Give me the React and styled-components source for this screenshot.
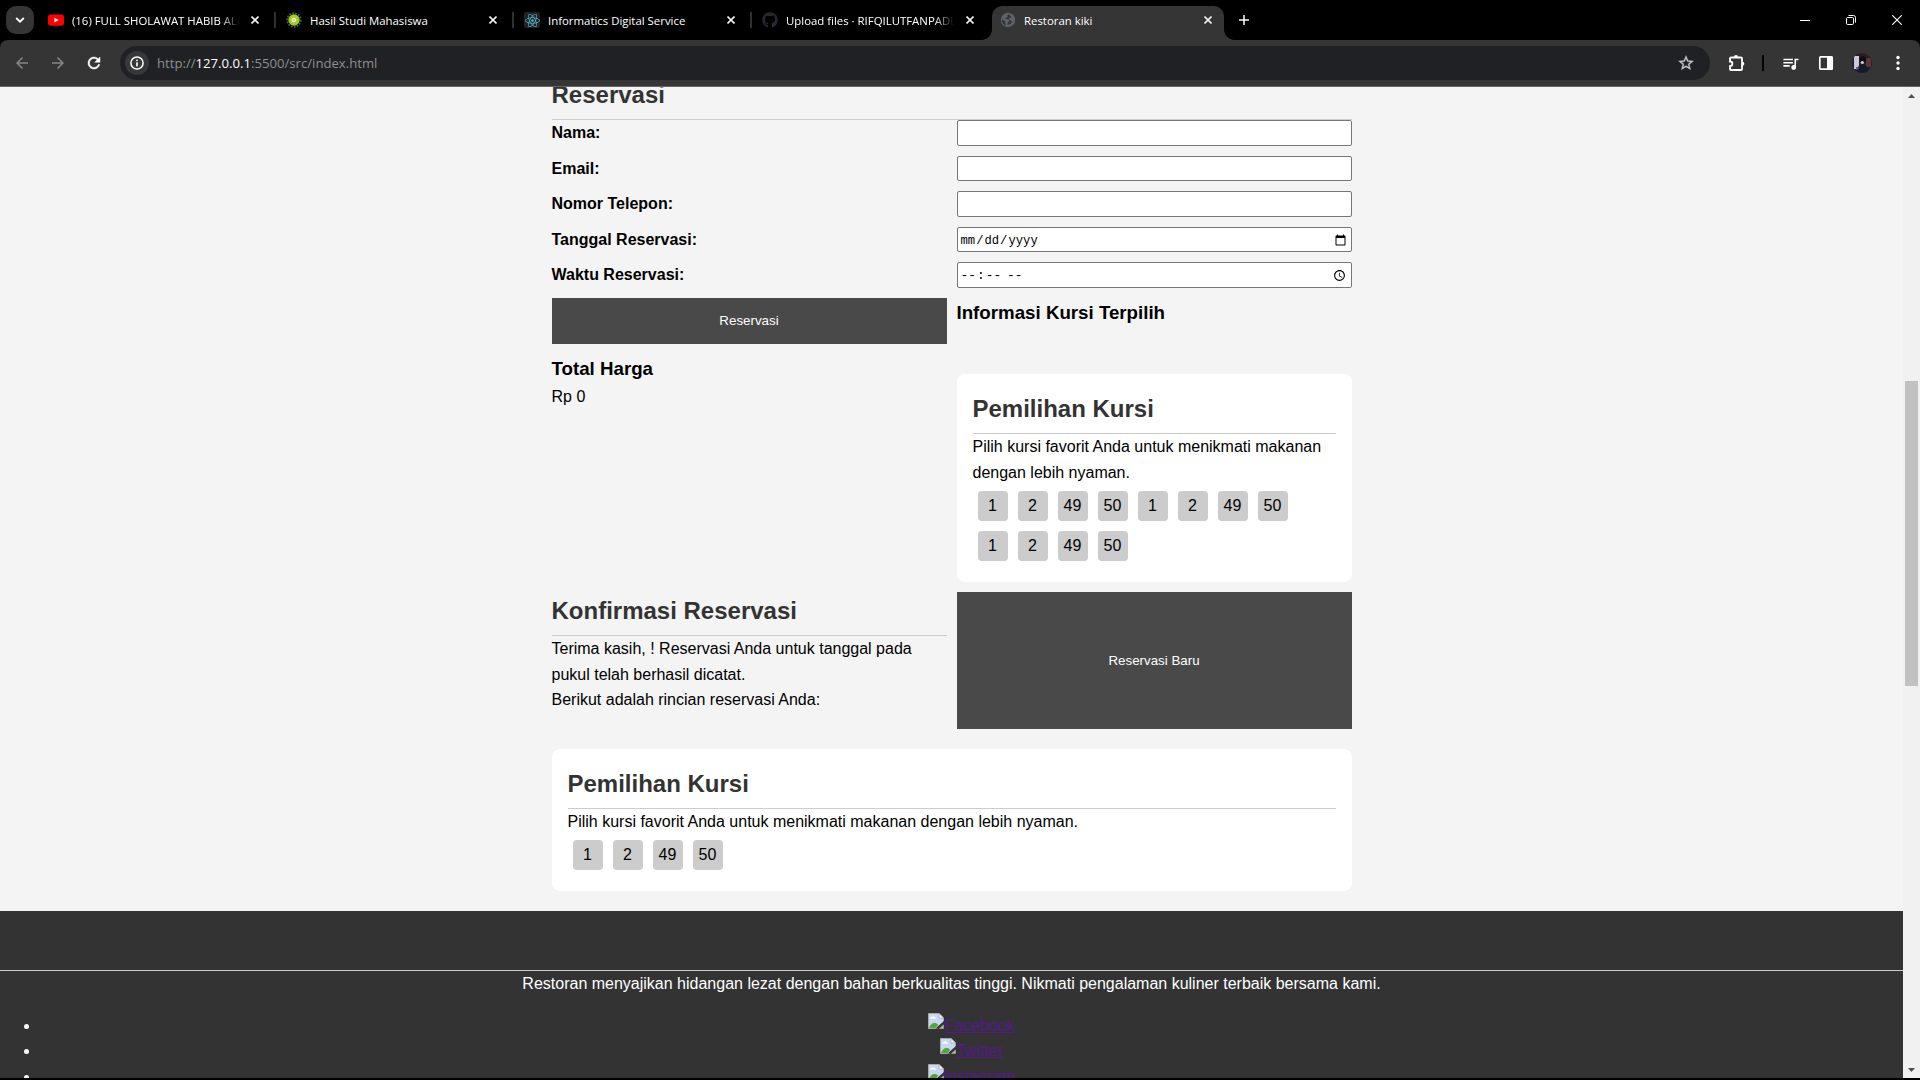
import React from "react";
import styled, { createGlobalStyle, css } from "styled-components";
import { FaGithub, FaReact } from "react-icons/fa";

const GlobalStyle = createGlobalStyle`
  * { box-sizing: border-box; margin: 0; padding: 0; }
  html, body, #root { height: 100%; overflow: hidden; }
  body { background: #000; }
`;

const UI_FONT = `"Open Sans", "Noto Sans", sans-serif`;
const PAGE_FONT = `"Liberation Sans", Arial, sans-serif`;

/* ---------- browser window ---------- */

const Window = styled.div`
  width: 1920px;
  height: 1080px;
  display: flex;
  flex-direction: column;
  background: #000;
  padding-bottom: 2px;
  overflow: hidden;
  font-family: ${UI_FONT};
`;

const TabStrip = styled.div`
  flex: 0 0 40px;
  display: flex;
  align-items: stretch;
  padding-left: 6px;
`;

const TabSearch = styled.div`
  width: 28px;
  height: 28px;
  margin: 6px 4px 0 0;
  border-radius: 10px;
  background: #353535;
  display: flex;
  align-items: center;
  justify-content: center;
`;

const Tab = styled.div`
  width: 238px;
  height: 40px;
  padding: 0 0 0 10px;
  display: flex;
  align-items: center;
  position: relative;
`;

const ActiveTab = styled.div`
  width: 232px;
  height: 34px;
  margin: 6px 0 0 2px;
  padding: 0 0 6px 8px;
  display: flex;
  align-items: center;
  background: #353535;
  border-radius: 10px 10px 0 0;
  position: relative;
  &::before,
  &::after {
    content: "";
    position: absolute;
    bottom: 0;
    width: 10px;
    height: 10px;
  }
  &::before {
    left: -10px;
    background: radial-gradient(circle at 0 0, transparent 9.5px, #353535 10px);
  }
  &::after {
    right: -10px;
    background: radial-gradient(circle at 100% 0, transparent 9.5px, #353535 10px);
  }
`;

const Favicon = styled.div`
  width: 16px;
  height: 16px;
  margin-right: 8px;
  display: flex;
  align-items: center;
  justify-content: center;
  flex: none;
`;

const TabTitle = styled.div`
  width: 168px;
  height: 20px;
  padding-top: 2px;
  line-height: 18px;
  font-size: 11.4px;
  color: #fff;
  white-space: nowrap;
  overflow: hidden;
  ${(p) =>
    p.$fade &&
    css`
      mask-image: linear-gradient(90deg, #000 148px, transparent 168px);
    `}
`;

const CloseSlot = styled.div`
  width: 32px;
  display: flex;
  justify-content: center;
`;

const Divider = styled.div`
  width: 2px;
  height: 16px;
  margin-left: 3px;
  background: #303030;
`;

const NewTab = styled.div`
  width: 28px;
  margin-left: 6px;
  display: flex;
  align-items: center;
  justify-content: center;
`;

const WindowControls = styled.div`
  margin-left: auto;
  display: flex;
`;

const ControlButton = styled.div`
  width: 46px;
  display: flex;
  align-items: center;
  justify-content: center;
`;

const Toolbar = styled.div`
  flex: 0 0 47px;
  display: flex;
  align-items: center;
  background: #353535;
  border-radius: 8px 8px 0 0;
  border-bottom: 1px solid #666;
  padding: 0 4px;
`;

const ToolButton = styled.div`
  width: ${(p) => p.$w || 36}px;
  height: 34px;
  flex: none;
  display: flex;
  align-items: center;
  justify-content: center;
`;

const AddressBar = styled.div`
  width: 1590px;
  height: 34px;
  flex: none;
  margin-left: 8px;
  padding: 0 12px 0 5px;
  border-radius: 17px;
  background: #202124;
  display: flex;
  align-items: center;
`;

const SiteInfo = styled.div`
  width: 24px;
  height: 24px;
  border-radius: 50%;
  background: #37383a;
  display: flex;
  align-items: center;
  justify-content: center;
`;

const Url = styled.div`
  margin-left: 8px;
  flex: 1;
  font-size: 13.15px;
  line-height: 20px;
  color: #8d8f92;
  b {
    font-weight: 400;
    color: #fff;
  }
`;

const ToolDivider = styled.div`
  width: 2px;
  height: 16px;
  margin-right: 8px;
  background: #000;
`;

/* ---------- viewport ---------- */

const Viewport = styled.div`
  flex: 1;
  min-height: 0;
  display: flex;
`;

const Page = styled.div`
  width: 1903px;
  height: 991px;
  overflow: hidden;
  background: #f4f4f4;
  color: #000;
  font-family: ${PAGE_FONT};
  font-size: 16px;
  line-height: 25.6px;
`;

const Scrollbar = styled.div`
  width: 17px;
  background: #f1f1f1;
  display: flex;
  flex-direction: column;
  align-items: center;
`;

const ScrollArrow = styled.div`
  height: 17px;
  flex: none;
  display: flex;
  align-items: center;
`;

const ScrollTrack = styled.div`
  flex: 1;
  padding-top: 277px;
`;

const ScrollThumb = styled.div`
  width: 13px;
  height: 305px;
  background: #c1c1c1;
`;

/* ---------- page content ---------- */

const Main = styled.main`
  width: 800px;
  margin: -11.43px auto 0;
`;

const Heading = styled.h2`
  min-height: 44.4px;
  font-size: 24px;
  line-height: 38.4px;
  font-weight: 700;
  color: #333;
  padding-bottom: 5px;
  border-bottom: 1px solid #ccc;
`;

const SubHeading = styled.h3`
  font-size: 18.72px;
  line-height: 29.95px;
  font-weight: 700;
`;

const Form = styled.div`
  display: grid;
  grid-template-columns: 1fr 1fr;
  gap: 10px;
`;

const Label = styled.label`
  font-weight: 700;
  height: 25.6px;
`;

const Field = styled.input`
  width: 100%;
  height: 25.6px;
  padding: ${(p) => (p.type === "date" ? "3px 2px 1px" : "2px 2px 1px")};
  border: 1px solid #767676;
  border-radius: 2px;
  background: #fff;
  color: #000;
  font-family: "Liberation Mono", monospace;
  font-size: ${(p) => (p.type === "time" ? 12.9 : 12.2)}px;
  &::-webkit-calendar-picker-indicator {
    margin-right: ${(p) => (p.type === "time" ? -1 : 0)}px;
  }
`;

const Button = styled.button`
  border: 0;
  background: #494949;
  color: #fff;
  font-family: ${PAGE_FONT};
  font-size: 13.333px;
`;

const SeatInfo = styled.div`
  padding-bottom: 16px;
`;

const Card = styled.section`
  margin-top: 20px;
  padding: 16px;
  border-radius: 8px;
  background: #fff;
`;

const Seats = styled.div`
  display: flex;
  flex-wrap: wrap;
`;

const SeatGroup = styled.div`
  display: flex;
`;

const Seat = styled.div`
  width: 30px;
  height: 30px;
  margin: 5px;
  border-radius: 4px;
  background: #ccc;
  text-align: center;
  line-height: 30px;
`;

const Confirmation = styled.section`
  padding-bottom: 16px;
`;

const Footer = styled.footer`
  margin-top: 20px;
  padding: 16px 0;
  background: #333;
  color: #fff;
  text-align: center;
`;

const SocialList = styled.ul`
  margin-top: 16px;
  padding-left: 40px;
  list-style: disc;
`;

const SocialLink = styled.a`
  color: #551a8b;
  text-decoration: none;
  svg {
    vertical-align: 2px;
  }
  span {
    text-decoration: underline;
  }
`;

/* ---------- icons ---------- */

const CloseIcon = ({ size = 8 }) => (
  <svg width={size} height={size} viewBox="0 0 8 8">
    <path d="M.5.5l7 7M7.5.5l-7 7" stroke="#f1f1f1" strokeWidth="1.6" />
  </svg>
);

const YoutubeIcon = () => (
  <svg width="16" height="16" viewBox="0 0 16 16">
    <rect x="0" y="2.4" width="16" height="11.4" rx="2.8" fill="#f00" />
    <path d="M6.4 5.7v4.8l4.2-2.4z" fill="#fff" />
  </svg>
);

const BurstIcon = () => (
  <svg width="16" height="16" viewBox="0 0 16 16">
    <circle cx="8" cy="8" r="6.8" fill="none" stroke="#2c6b63" strokeWidth="1.8" strokeDasharray="1.7 1.3" />
    <circle cx="8" cy="8" r="5.7" fill="#a5c61a" />
    <g stroke="#d3e26a" strokeWidth=".7">
      <path d="M8 3.6v8.8M3.6 8h8.8M4.9 4.9l6.2 6.2M11.1 4.9l-6.2 6.2" />
    </g>
    <circle cx="8" cy="8" r="2" fill="#fff" />
    <circle cx="8" cy="8" r="1" fill="#c9cf5a" />
  </svg>
);

const ReactBadge = styled.div`
  width: 16px;
  height: 16px;
  border-radius: 2px;
  background: #222;
  color: #53b7d0;
  font-size: 15px;
  display: flex;
  align-items: center;
  justify-content: center;
`;

const GlobeIcon = () => (
  <svg width="16" height="16" viewBox="0 0 16 16">
    <circle cx="8" cy="8" r="7.2" fill="#5f6368" />
    <path
      d="M8.6 2.2c-1.2.5-1.6 1.2-1 2 .5.7-.3 1.2-1.3 1.3-1 .1-1.2.9-.4 1.4.8.4 2.2.1 3 .8.8.8.3 1.7-.6 2.3-.7.5-.4 1.5-1.2 2.6 1.9.5 4.1-.8 5-2.6-.7-.8-1-1.7-2.1-1.9-.9-.2-1.4-.9-.9-1.6.4-.6 1.5-.3 2.2-.9-.5-1.5-1.5-2.7-2.7-3.4zM1.9 7.4c.9.5 2.2.9 3 1.7.7.7.3 1.8.5 2.8.1.6.5.9.9 1.6-2.7-.7-4.6-3-4.4-6.1z"
      fill="#353535"
    />
  </svg>
);

const ICON_PATHS = {
  back: "M20 11H7.83l5.59-5.59L12 4l-8 8 8 8 1.41-1.41L7.83 13H20v-2z",
  forward: "M4 13h12.17l-5.59 5.59L12 20l8-8-8-8-1.41 1.41L16.17 11H4v2z",
  reload:
    "M17.65 6.35A7.958 7.958 0 0 0 12 4c-4.42 0-7.99 3.58-7.99 8s3.57 8 7.99 8c3.73 0 6.84-2.55 7.73-6h-2.08A5.99 5.99 0 0 1 12 18c-3.31 0-6-2.69-6-6s2.69-6 6-6c1.66 0 3.14.69 4.22 1.78L13 11h7V4l-2.35 2.35z",
  star: "M22 9.24l-7.19-.62L12 2 9.19 8.63 2 9.24l5.46 4.73L5.82 21 12 17.27 18.18 21l-1.63-7.03L22 9.24zM12 15.4l-3.76 2.27 1-4.28-3.32-2.88 4.38-.38L12 6.1l1.71 4.04 4.38.38-3.32 2.88 1 4.28L12 15.4z",
  queue:
    "M15 6H3v2h12V6zm0 4H3v2h12v-2zM3 16h8v-2H3v2zM17 6v8.18c-.31-.11-.65-.18-1-.18-1.66 0-3 1.34-3 3s1.34 3 3 3 3-1.34 3-3V8h3V6h-5z",
};

const Material = ({ name, size = 18, color = "#fff", stroke = 0 }) => (
  <svg width={size} height={size} viewBox="0 0 24 24" fill={color} stroke={color} strokeWidth={stroke}>
    <path d={ICON_PATHS[name]} />
  </svg>
);

const InfoIcon = () => (
  <svg width="14" height="14" viewBox="0 0 14 14">
    <circle cx="7" cy="7" r="6.1" fill="none" stroke="#fff" strokeWidth="1.5" />
    <rect x="6.2" y="6.2" width="1.6" height="4.2" fill="#fff" />
    <rect x="6.2" y="3.6" width="1.6" height="1.5" fill="#fff" />
  </svg>
);

const PuzzleIcon = () => (
  <svg width="18" height="18" viewBox="-1 0 18 18">
    <path
      d="M2 4.5a1 1 0 0 1 1-1H13a1 1 0 0 1 1 1V15a1 1 0 0 1-1 1H3a1 1 0 0 1-1-1v-2.9c1.5 0 2.4-.9 2.4-2.3S3.5 7.5 2 7.5z"
      fill="none"
      stroke="#fff"
      strokeWidth="1.8"
    />
    <path d="M5.9 3.2a2.1 2.1 0 0 1 4.2 0zM14.300 7.700a2.100 2.100 0 0 1 0 4.200z" fill="#fff" />
  </svg>
);

const SidePanelIcon = () => (
  <svg width="16" height="16" viewBox="0 0 16 16">
    <rect x="1.8" y="1.8" width="12.4" height="12.4" rx="1" fill="none" stroke="#fff" strokeWidth="1.7" />
    <rect x="9" y="1.5" width="5.5" height="13" fill="#fff" />
  </svg>
);

const AvatarIcon = () => (
  <svg width="20" height="20" viewBox="0 0 20 20">
    <defs>
      <clipPath id="avatar">
        <circle cx="10" cy="10" r="10" />
      </clipPath>
    </defs>
    <g clipPath="url(#avatar)">
      <rect width="20" height="20" fill="#2c1d24" />
      <rect x="2" y="3" width="5" height="13" fill="#c9c8dc" />
      <rect x="14" y="5" width="5" height="9" fill="#593638" />
      <circle cx="11" cy="6.5" r="3.2" fill="#0d0f16" />
      <path d="M5 20c0-6 2-8.5 5-8.5s7 2.5 7 8.5z" fill="#131c2a" />
      <circle cx="10.3" cy="9.5" r="1.6" fill="#d8d0d4" />
      <rect x="4" y="14" width="2.5" height="2.5" fill="#7a5a9a" />
    </g>
  </svg>
);

const DotsIcon = () => (
  <svg width="4" height="16" viewBox="0 0 4 16" fill="#fff">
    <circle cx="2" cy="2.5" r="1.7" />
    <circle cx="2" cy="8" r="1.7" />
    <circle cx="2" cy="13.5" r="1.7" />
  </svg>
);

const BrokenImage = () => (
  <svg width="16" height="16" viewBox="0 0 16 16">
    <path d="M.5.5H11L15.5 5v5L10 15.5H.5z" fill="#c6d8f5" />
    <path d="M2 5.500c0-1 .9-1.600 1.700-1.400C4.200 2.800 6.400 2.900 6.700 4.300c1 0 1.400.5 1.300 1.400z" fill="#fff" />
    <path d="M1 15c1-3 3-5 5.500-5 1.600 0 2.700.5 3.700 1.700L7.500 15z" fill="#52a835" />
    <path d="M.5 15.500V.5H11L15.500 5v3.500M.5 15.500H8.500" fill="none" stroke="#a8a8a8" />
    <path d="M11 .5V5h4.500z" fill="#fff" stroke="#a8a8a8" strokeWidth=".8" />
    <path d="M7.500 15.500L16 8v2.500l-5 5z" fill="#333" />
    <path d="M11.500 15.500L15.500 12v3.500z" fill="#a9c98f" stroke="#a8a8a8" strokeWidth=".7" />
  </svg>
);

const ArrowGlyph = ({ down }) => (
  <svg width="7" height="4" viewBox="0 0 7 4">
    <path d={down ? "M0 0h7L3.5 4z" : "M0 4h7L3.5 0z"} fill="#505050" />
  </svg>
);

/* ---------- data ---------- */

const TABS = [
  { title: "(16) FULL SHOLAWAT HABIB ALI", fade: true, icon: <YoutubeIcon /> },
  { title: "Hasil Studi Mahasiswa", icon: <BurstIcon /> },
  { title: "Informatics Digital Service", icon: <ReactBadge><FaReact /></ReactBadge> },
  { title: "Upload files · RIFQILUTFANPADLI", fade: true, icon: <FaGithub size={16} color="#24292f" /> },
];

const FIELDS = [
  ["Nama:", "text"],
  ["Email:", "email"],
  ["Nomor Telepon:", "tel"],
  ["Tanggal Reservasi:", "date"],
  ["Waktu Reservasi:", "time"],
];

const SEATS = [1, 2, 49, 50];

const SeatPicker = ({ groups = 1 }) => (
  <Card>
    <Heading>Pemilihan Kursi</Heading>
    <p>Pilih kursi favorit Anda untuk menikmati makanan dengan lebih nyaman.</p>
    <Seats>
      {Array.from({ length: groups }, (_, g) => (
        <SeatGroup key={g}>
          {SEATS.map((n) => (
            <Seat key={n}>{n}</Seat>
          ))}
        </SeatGroup>
      ))}
    </Seats>
  </Card>
);

const BrowserChrome = () => (
  <>
    <TabStrip>
      <TabSearch>
        <svg width="10" height="6" viewBox="0 0 10 6">
          <path d="M1.2 1L5 4.7 8.8 1" fill="none" stroke="#fff" strokeWidth="1.8" />
        </svg>
      </TabSearch>
      {TABS.map((t, i) => (
        <Tab key={t.title}>
          <Favicon>{t.icon}</Favicon>
          <TabTitle $fade={t.fade}>{t.title}</TabTitle>
          <CloseSlot>
            <CloseIcon />
          </CloseSlot>
          {i < 3 && <Divider />}
        </Tab>
      ))}
      <ActiveTab>
        <Favicon>
          <GlobeIcon />
        </Favicon>
        <TabTitle>Restoran kiki</TabTitle>
        <CloseSlot>
          <CloseIcon />
        </CloseSlot>
      </ActiveTab>
      <NewTab>
        <svg width="10" height="10" viewBox="0 0 10 10">
          <path d="M5 0v10M0 5h10" stroke="#fff" strokeWidth="1.5" />
        </svg>
      </NewTab>
      <WindowControls>
        <ControlButton>
          <svg width="10" height="10" viewBox="0 0 10 10">
            <path d="M0 5.5h10" stroke="#fff" />
          </svg>
        </ControlButton>
        <ControlButton>
          <svg width="10" height="10" viewBox="0 0 10 10" fill="none" stroke="#fff">
            <rect x=".5" y="2.5" width="7" height="7" rx="1.2" />
            <path d="M2.5.5H7.5a2 2 0 0 1 2 2V7.5" />
          </svg>
        </ControlButton>
        <ControlButton>
          <svg width="10" height="10" viewBox="0 0 10 10">
            <path d="M.2.2l9.6 9.6M9.8.2L.2 9.8" stroke="#fff" strokeWidth="1.1" />
          </svg>
        </ControlButton>
      </WindowControls>
    </TabStrip>
    <Toolbar>
      <ToolButton>
        <Material name="back" color="#868686" />
      </ToolButton>
      <ToolButton>
        <Material name="forward" color="#868686" />
      </ToolButton>
      <ToolButton>
        <Material name="reload" stroke={0.6} />
      </ToolButton>
      <AddressBar>
        <SiteInfo>
          <InfoIcon />
        </SiteInfo>
        <Url>
          http://<b>127.0.0.1</b>:5500/src/index.html
        </Url>
        <ToolButton $w={24}>
          <Material name="star" color="#c7c7c7" stroke={0.4} />
        </ToolButton>
      </AddressBar>
      <ToolButton $w={52}>
        <PuzzleIcon />
      </ToolButton>
      <ToolDivider />
      <ToolButton>
        <Material name="queue" size={19} />
      </ToolButton>
      <ToolButton>
        <SidePanelIcon />
      </ToolButton>
      <ToolButton>
        <AvatarIcon />
      </ToolButton>
      <ToolButton>
        <DotsIcon />
      </ToolButton>
    </Toolbar>
  </>
);

export default function App() {
  return (
    <Window>
      <GlobalStyle />
      <BrowserChrome />
      <Viewport>
        <Page>
          <Main>
            <Heading>Reservasi</Heading>
            <Form>
              {FIELDS.map(([label, type]) => (
                <React.Fragment key={type}>
                  <Label>{label}</Label>
                  <Field type={type} />
                </React.Fragment>
              ))}
              <Button>Reservasi</Button>
              <SeatInfo>
                <SubHeading>Informasi Kursi Terpilih</SubHeading>
              </SeatInfo>
              <div>
                <SubHeading>Total Harga</SubHeading>
                <p>Rp 0</p>
              </div>
              <SeatPicker groups={3} />
              <Confirmation>
                <Heading>Konfirmasi Reservasi</Heading>
                <p>Terima kasih, ! Reservasi Anda untuk tanggal pada pukul telah berhasil dicatat.</p>
                <p>Berikut adalah rincian reservasi Anda:</p>
              </Confirmation>
              <Button>Reservasi Baru</Button>
            </Form>
            <SeatPicker />
          </Main>
          <Footer>
            <Heading />
            <p>
              Restoran menyajikan hidangan lezat dengan bahan berkualitas tinggi. Nikmati pengalaman kuliner terbaik
              bersama kami.
            </p>
            <SocialList>
              {["Facebook", "Twitter", "Instagram"].map((name) => (
                <li key={name}>
                  <SocialLink>
                    <BrokenImage />
                    <span>{name}</span>
                  </SocialLink>
                </li>
              ))}
            </SocialList>
          </Footer>
        </Page>
        <Scrollbar>
          <ScrollArrow>
            <ArrowGlyph />
          </ScrollArrow>
          <ScrollTrack>
            <ScrollThumb />
          </ScrollTrack>
          <ScrollArrow>
            <ArrowGlyph down />
          </ScrollArrow>
        </Scrollbar>
      </Viewport>
    </Window>
  );
}
